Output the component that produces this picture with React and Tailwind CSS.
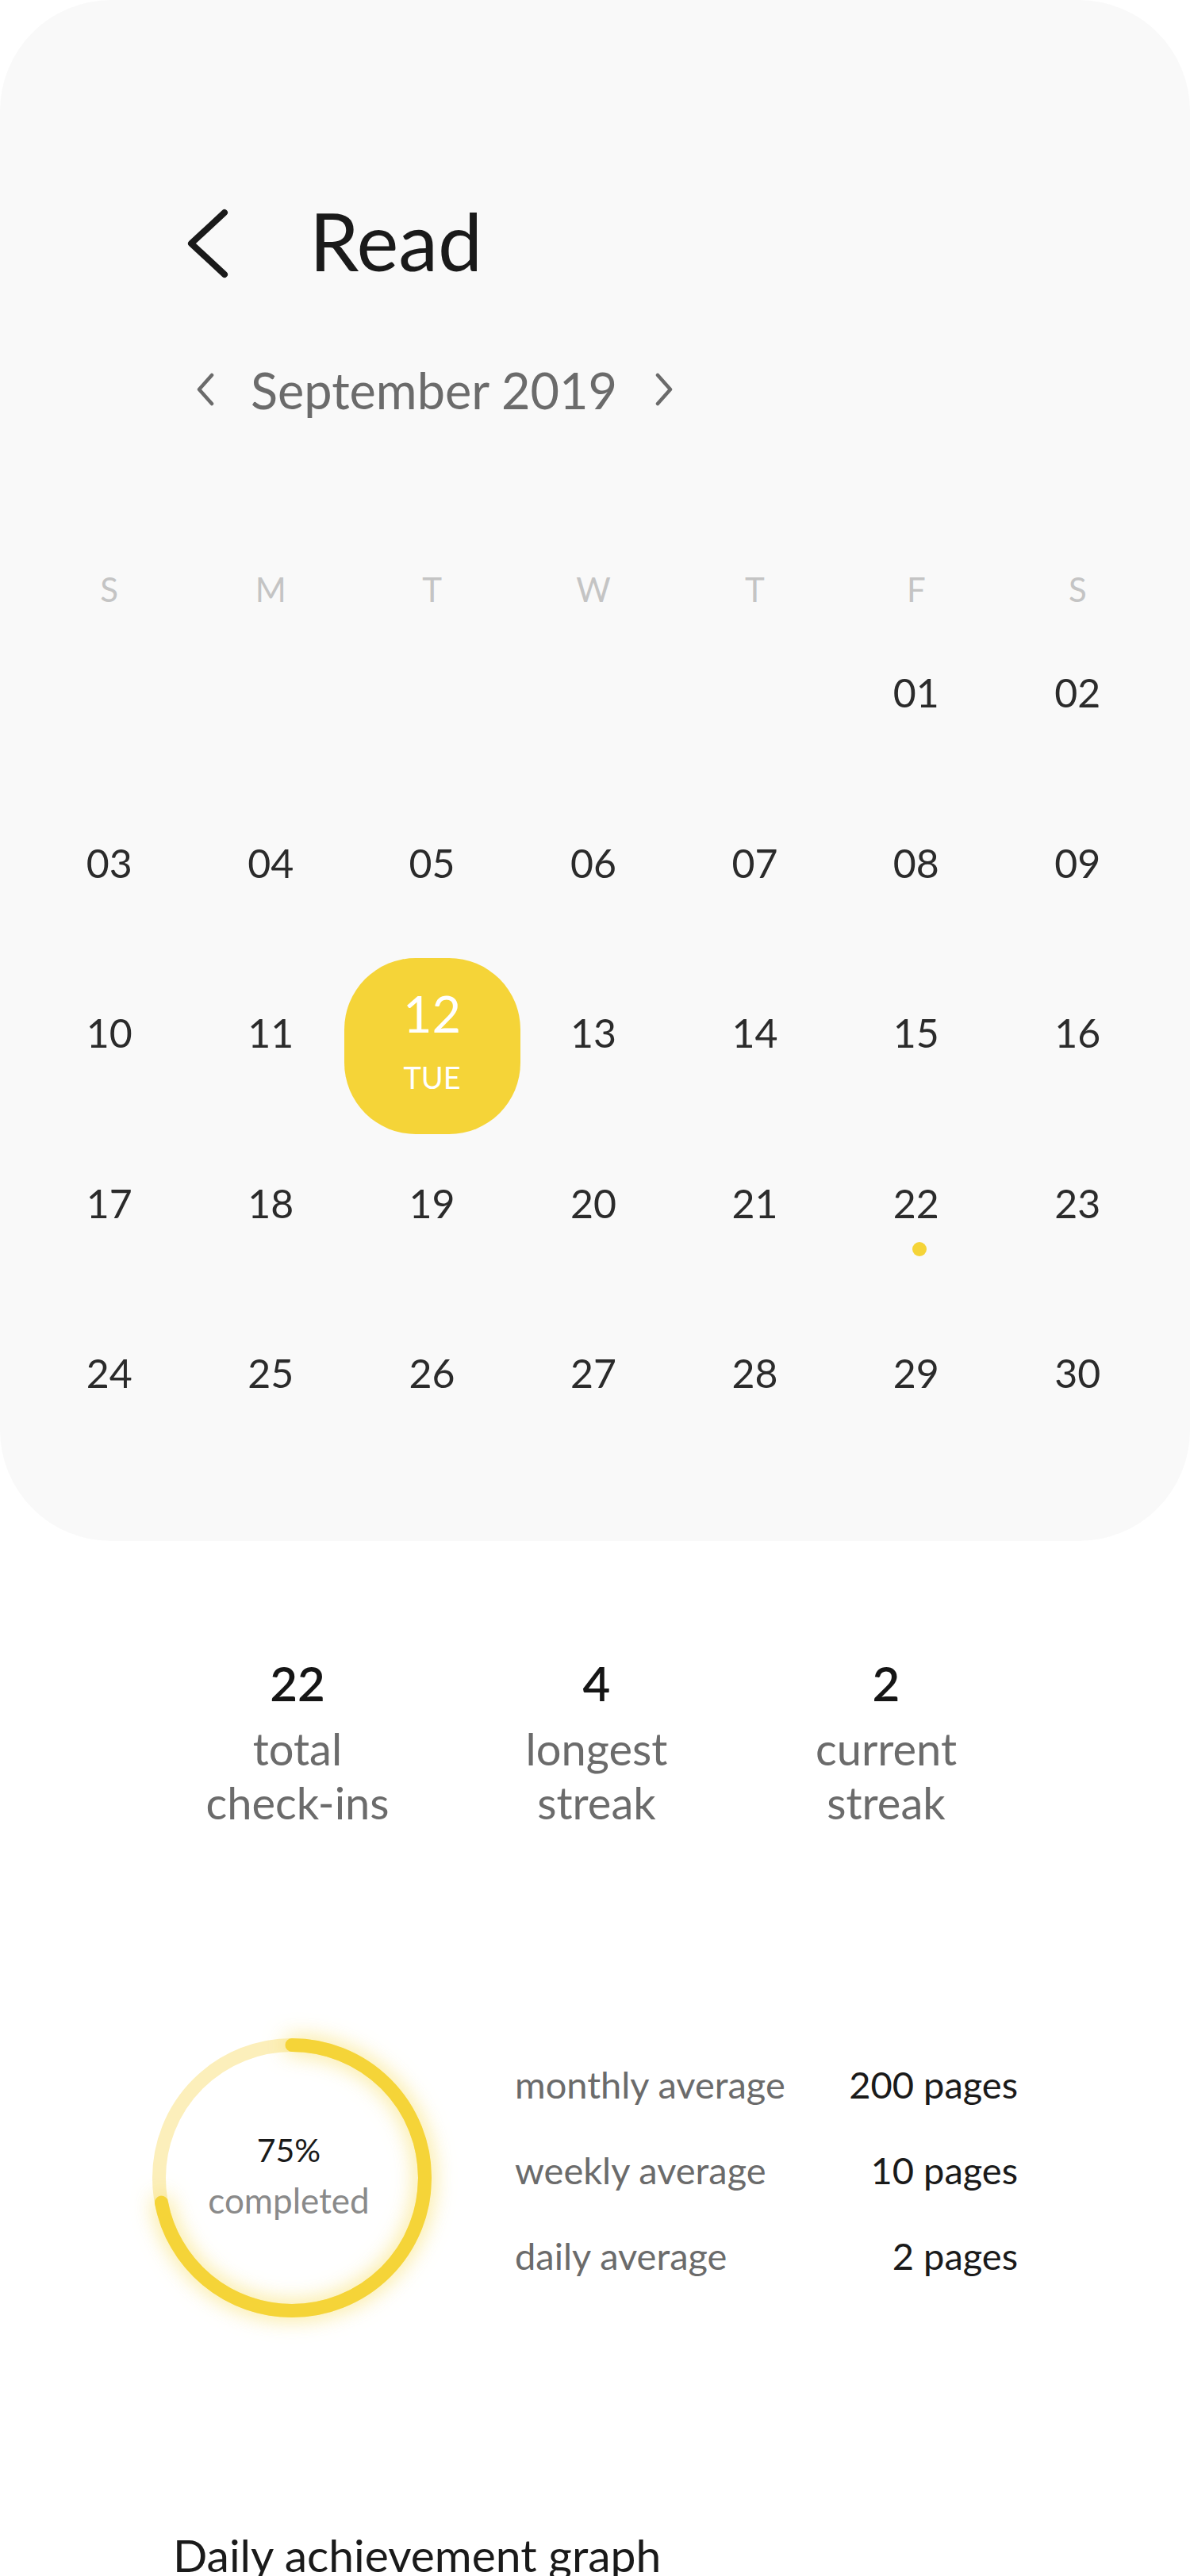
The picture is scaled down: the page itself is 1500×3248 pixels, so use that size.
import React from 'react';

const weekDays = ['S', 'M', 'T', 'W', 'T', 'F', 'S'];

const days = [...Array(5).fill(null), ...Array.from({ length: 30 }, (_, i) => i + 1)];

const pad = (n) => String(n).padStart(2, '0');

const R = 167.5;
const C = 2 * Math.PI * R;

const stats = [
    { value: '22', top: 'total', bottom: 'check-ins', className: 'ml-[225px]' },
    { value: '4', top: 'longest', bottom: 'streak', className: 'ml-[77px]' },
    { value: '2', top: 'current', bottom: 'streak', className: 'ml-[65px]' },
];

const averages = [
    { label: 'monthly average', value: '200 pages' },
    { label: 'weekly average', value: '10 pages' },
    { label: 'daily average', value: '2 pages' },
];

const App = () => {
    return (
        <div className="min-h-screen w-full bg-white font-[Lato,sans-serif]">
            {/* Calendar card */}
            <div className="rounded-[140px] bg-[#f9f9f9] pb-[104px] pt-[257px]">
                {/* Title */}
                <div className="flex h-[100px] items-center pl-[234px]">
                    <svg width="56" height="92" viewBox="0 0 56 92" fill="none" stroke="#1a1a1a" strokeWidth="8" strokeLinecap="round" strokeLinejoin="round">
                        <path d="M49 7 L7 46 L49 85" />
                    </svg>
                    <span className="mb-[8px] ml-[100px] text-[100px] leading-none text-[#1a1a1a]">Read</span>
                </div>

                {/* Month switcher */}
                <div className="mt-[94px] flex h-[80px] items-center pl-[246px]">
                    <svg className="shrink-0" width="26" height="44" viewBox="0 0 26 44" fill="none" stroke="#6b6b6b" strokeWidth="4.5" strokeLinecap="round" strokeLinejoin="round">
                        <path d="M21 4 L5 22 L21 40" />
                    </svg>
                    <span className="ml-[44px] text-[63px] leading-none text-[#6b6b6b]">September 2019</span>
                    <svg className="ml-[46px] shrink-0" width="26" height="44" viewBox="0 0 26 44" fill="none" stroke="#6b6b6b" strokeWidth="4.5" strokeLinecap="round" strokeLinejoin="round">
                        <path d="M5 4 L21 22 L5 40" />
                    </svg>
                </div>

                {/* Week header */}
                <div className="mt-[188px] grid h-[47px] grid-cols-7 pl-[36px] pr-[40px]">
                    {weekDays.map((d, i) => (
                        <div key={i} className="flex items-center justify-center text-[42px] leading-none text-[#c4c4c4]">
                            {d}
                        </div>
                    ))}
                </div>

                {/* Days */}
                <div className="grid grid-cols-7 pl-[36px] pr-[40px]">
                    {days.map((day, i) => (
                        <div key={i} className="relative flex h-[214.5px] items-center justify-center">
                            {day === 12 ? (
                                <div className="mt-[33px] flex h-[222px] w-[222px] shrink-0 flex-col items-center rounded-[90px] bg-[#f5d438] pt-[38px] text-white">
                                    <span className="text-[63px] leading-[63px]">12</span>
                                    <span className="mt-[30px] text-[38px] leading-[38px]">TUE</span>
                                </div>
                            ) : day ? (
                                <span className="text-[50px] leading-none text-[#2b2b2b]">{pad(day)}</span>
                            ) : null}
                            {day === 22 && (
                                <span className="absolute left-[97px] top-[156.5px] h-[18px] w-[18px] rounded-full bg-[#f5d438]"></span>
                            )}
                        </div>
                    ))}
                </div>
            </div>

            {/* Check-in stats */}
            <div className="mt-[149px] flex">
                {stats.map((s) => (
                    <div key={s.top} className={`flex w-[300px] flex-col items-center ${s.className}`}>
                        <span className="text-[60px] font-semibold leading-[60px] text-[#151515]">{s.value}</span>
                        <span className="mt-[19px] text-[56px] leading-[68px] text-[#6b6b6b]">{s.top}</span>
                        <span className="text-[56px] leading-[68px] text-[#6b6b6b]">{s.bottom}</span>
                    </div>
                ))}
            </div>

            {/* Progress + averages */}
            <div className="mt-[259px] flex items-start pl-[188px]">
                <div className="relative flex h-[360px] w-[360px] flex-col items-center pr-[8px] pt-[124px]">
                    <svg width="360" height="360" viewBox="0 0 360 360" className="absolute inset-0 overflow-visible">
                        <circle cx="180" cy="180" r={R} fill="none" stroke="#fcefbb" strokeWidth="17" />
                        <circle
                            cx="180"
                            cy="180"
                            r={R}
                            fill="none"
                            stroke="#f5d438"
                            strokeWidth="17"
                            strokeLinecap="round"
                            strokeDasharray={`${C * 0.72} ${C}`}
                            transform="rotate(-90 180 180)"
                            className="drop-shadow-[0_0_14px_rgba(245,212,56,0.7)]"
                        />
                    </svg>
                    <span className="relative text-[41px] leading-[41px] text-[#1a1a1a]">75%</span>
                    <span className="relative mt-[21px] text-[44px] leading-[44px] text-[#8a8a8a]">completed</span>
                </div>

                <div className="ml-[101px] mt-[8px] flex w-[634px] flex-col">
                    {averages.map((a) => (
                        <div key={a.label} className="flex h-[108px] items-center justify-between text-[47px] leading-[108px]">
                            <span className="text-[#6b6b6b]">{a.label}</span>
                            <span className="text-[#1a1a1a]">{a.value}</span>
                        </div>
                    ))}
                </div>
            </div>

            {/* Graph title */}
            <div className="mt-[267px] pl-[218px] text-[57px] leading-[57px] text-[#1a1a1a]">Daily achievement graph</div>
        </div>
    );
};

export default App;
